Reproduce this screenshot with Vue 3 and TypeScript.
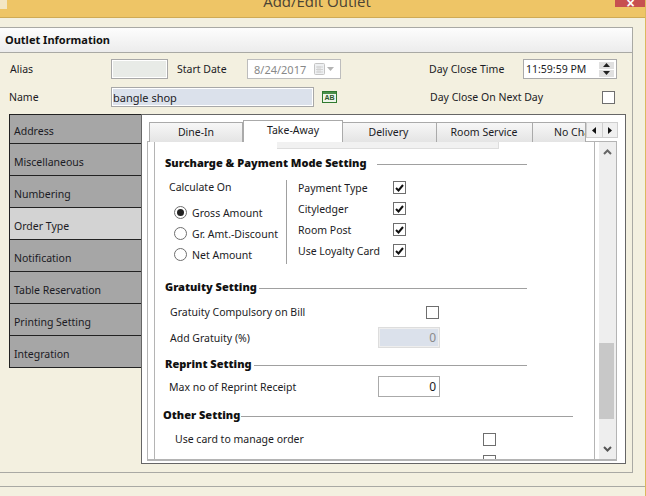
<script setup lang="ts">
const navItems = ['Address', 'Miscellaneous', 'Numbering', 'Order Type', 'Notification', 'Table Reservation', 'Printing Setting', 'Integration']
const tabs = [
  { label: 'Dine-In', cls: 't-dine' },
  { label: 'Take-Away', cls: 't-take' },
  { label: 'Delivery', cls: 't-del' },
  { label: 'Room Service', cls: 't-room' },
  { label: 'No Charge', cls: 't-no' }
]
const radios = [
  { label: 'Gross Amount', on: true },
  { label: 'Gr. Amt.-Discount', on: false },
  { label: 'Net Amount', on: false }
]
const pays = ['Payment Type', 'Cityledger', 'Room Post', 'Use Loyalty Card']
</script>

<template>
  <div class="win">
    <div class="titlebar">
      <div class="appicon"></div>
      <div class="title">Add/Edit Outlet</div>
      <div class="close"><span>×</span></div>
    </div>
    <div class="frame">
      <div class="head">Outlet Information</div>
      <div class="row r1">
        <span class="lab l-alias">Alias</span>
        <div class="inp alias"></div>
        <span class="lab l-start">Start Date</span>
        <div class="inp date">
          <span>8/24/2017</span>
          <svg class="cal" width="11" height="12" viewBox="0 0 11 12"><rect x="0.5" y="0.5" width="10" height="11" rx="1" fill="#eef0f2" stroke="#c4c4c4"/><path d="M2 4h7M2 6.500h7M2 9h7M4 3v7M6 3v7" stroke="#d2d2d2"/></svg>
          <svg class="drop" width="7" height="4" viewBox="0 0 7 4"><path d="M0 0h7L3.500 4z" fill="#b4b4b4"/></svg>
        </div>
        <span class="lab l-close">Day Close Time</span>
        <div class="inp time">
          <span>11:59:59 PM</span>
          <div class="spin">
            <div class="sb"><svg width="7" height="4" viewBox="0 0 7 4"><path d="M3.500 0L7 4H0z" fill="#222"/></svg></div>
            <div class="sb"><svg width="7" height="4" viewBox="0 0 7 4"><path d="M0 0h7L3.500 4z" fill="#222"/></svg></div>
          </div>
        </div>
      </div>
      <div class="row r2">
        <span class="lab l-name">Name</span>
        <div class="inp name">bangle shop</div>
        <div class="ab"><i></i><b>AB</b></div>
        <span class="lab l-next">Day Close On Next Day</span>
        <div class="chk c-next"></div>
      </div>
      <div class="content">
        <div class="nav">
          <div v-for="(n, i) in navItems" :key="n" class="navitem" :class="{ active: i === 3, first: i === 0 }">{{ n }}</div>
        </div>
        <div class="panel">
          <div class="tabrow">
            <div v-for="(t, i) in tabs" :key="t.label" class="tab" :class="[t.cls, { on: i === 1 }]"><span>{{ t.label }}</span></div>
            <div class="scrollers">
              <div class="sc"><svg width="4" height="7" viewBox="0 0 4 7"><path d="M4 0v7L0 3.500z" fill="#111"/></svg></div>
              <div class="sc"><svg width="4" height="7" viewBox="0 0 4 7"><path d="M0 0v7l4-3.500z" fill="#111"/></svg></div>
            </div>
          </div>
          <div class="pane">
            <div class="view">
              <div class="strip"></div>
              <div class="sec s1"><b>Surcharge &amp; Payment Mode Setting</b><i class="ln"></i></div>
              <div class="calc">
                <div class="calc-l">
                  <div class="lab calc-t">Calculate On</div>
                  <div v-for="r in radios" :key="r.label" class="radio-row">
                    <span class="radio" :class="{ on: r.on }"></span>
                    <span class="lab">{{ r.label }}</span>
                  </div>
                </div>
                <div class="calc-r">
                  <div v-for="p in pays" :key="p" class="pay-row">
                    <span class="lab pay-l">{{ p }}</span>
                    <span class="chk ticked"><svg width="9" height="8" viewBox="0 0 9 8"><path d="M1 4l2.500 2.500L8 1" fill="none" stroke="#111" stroke-width="2"/></svg></span>
                  </div>
                </div>
              </div>
              <div class="sec s2"><b>Gratuity Setting</b><i class="ln"></i></div>
              <div class="frow f1"><span class="lab w256">Gratuity Compulsory on Bill</span><span class="chk"></span></div>
              <div class="frow f2"><span class="lab w208">Add Gratuity (%)</span><div class="num dis">0</div></div>
              <div class="sec s3"><b>Reprint Setting</b><i class="ln"></i></div>
              <div class="frow f3"><span class="lab w209">Max no of Reprint Receipt</span><div class="num">0</div></div>
              <div class="sec s4"><b>Other Setting</b><i class="ln"></i></div>
              <div class="frow f4"><span class="lab w308">Use card to manage order</span><span class="chk"></span></div>
              <div class="frow f5"><span class="w308"></span><span class="chk"></span></div>
            </div>
            <div class="sbar">
              <svg class="ch" width="9" height="6" viewBox="0 0 9 6"><path d="M1 5l3.500-3.500L8 5" fill="none" stroke="#666" stroke-width="2"/></svg>
              <div class="track"><div class="thumb"></div></div>
              <svg class="ch" width="9" height="6" viewBox="0 0 9 6"><path d="M1 1l3.500 3.500L8 1" fill="none" stroke="#555" stroke-width="2"/></svg>
            </div>
          </div>
        </div>
      </div>
    </div>
    <div class="foot"></div>
  </div>
</template>

<style>
html, body { margin: 0; padding: 0; overflow: hidden; }
</style>

<style scoped>
.win {
  width: 646px; height: 496px; box-sizing: border-box; overflow: hidden;
  background: #f3f0e0; border-right: 1px solid #dcb85e;
  font: 10.500px "Noto Sans", "Liberation Sans", sans-serif; color: #1b1b24;
}
.titlebar {
  height: 18px; box-sizing: border-box; margin-right: -1px; background: #eec566; border-bottom: 1px solid #cfab55;
  display: flex; justify-content: space-between; overflow: hidden;
}
.appicon { width: 7px; height: 9px; background: #f3e6c4; }
.title { font: 15px "Open Sans", sans-serif; color: #4a4334; line-height: 16px; margin-top: -7px; margin-left: 12px; }
.close { width: 31px; height: 7px; background: #c75050; color: #fff; text-align: center; font: bold 14px/6px "Liberation Sans", sans-serif; overflow: hidden; }
.frame {
  margin-top: 9px; width: 633px; height: 446px; box-sizing: border-box;
  border: 1px solid #a9a9a4; border-left: 0;
}
.head {
  height: 25px; box-sizing: border-box; border-bottom: 1px solid #a9a9a4;
  background: linear-gradient(#fdfdfd, #ececec);
  font-weight: bold; line-height: 24px; padding-left: 5px; font-size: 11px; color: #111;
}
.row { display: flex; align-items: center; height: 20px; }
.r1 { margin-top: 6px; }
.r2 { margin-top: 8px; }
.lab { white-space: nowrap; }
.l-alias { margin-left: 10px; width: 101px; }
.l-start { margin-left: 9px; width: 70px; }
.l-close { margin-left: 88px; width: 94px; }
.l-name { margin-left: 9px; width: 102px; }
.l-next { margin-left: 93px; width: 172px; }
.inp { box-sizing: border-box; height: 20px; border: 1px solid #a8a8a8; display: flex; align-items: center; }
.alias { width: 57px; background: #e8ebe7; box-shadow: inset 0 0 0 1px #fff; }
.date { width: 94px; background: #fff; border-color: #bdbdbd; color: #888; padding-left: 6px; }
.date span { width: 60px; font-size: 11px; }
.cal { margin-right: 2px; }
.time { width: 94px; background: #fff; border-color: #aaa; padding-left: 2px; justify-content: space-between; }
.time span { font-size: 10.500px; }
.spin { width: 15px; margin-right: 2px; display: flex; flex-direction: column; gap: 1px; }
.sb { height: 7px; background: #e0e0e0; display: flex; align-items: center; justify-content: center; }
.name { width: 203px; background: #dbe1eb; padding-left: 1px; box-shadow: inset 0 0 0 1px #fff; font-size: 11px; }
.ab { width: 15px; height: 12px; margin-left: 8px; box-sizing: border-box; border: 1px solid #2f7a2f; background: #eef5ea; display: flex; flex-direction: column; align-items: center; overflow: hidden; }
.ab i { display: block; width: 100%; height: 2px; background: #4a8f4a; flex: none; }
.ab b { font: bold 7px/8px "Liberation Sans", sans-serif; color: #2c5a2c; }
.chk { box-sizing: border-box; width: 13px; height: 13px; border: 1px solid #6e6e6e; background: #fff; display: inline-flex; align-items: center; justify-content: center; flex: none; }
.content { display: flex; margin-top: 7px; margin-left: 9px; }
.nav { width: 132px; height: 254px; box-sizing: border-box; border: 1px solid #222; border-right: 0; background: #a6a6a6; }
.navitem { height: 32px; box-sizing: border-box; border-bottom: 1px solid #222; line-height: 37px; padding-left: 4px; }
.navitem.first { height: 29px; line-height: 33px; }
.navitem:last-child { border-bottom: 0; height: 32px; }
.navitem.active { background: #d3d3d3; }
.panel { width: 485px; height: 350px; box-sizing: border-box; border: 1px solid #666; background: #fff; }
.tabrow { display: flex; height: 26px; box-sizing: border-box; padding: 5px 0 0 7px; position: relative; }
.tab { box-sizing: border-box; height: 20px; margin-top: 2px; border: 1px solid #aaa; border-bottom: 0; border-left: 0; background: linear-gradient(#f7f7f7, #e4e4e4); text-align: center; line-height: 19px; overflow: hidden; white-space: nowrap; }
.t-dine { width: 94px; border-left: 1px solid #aaa; }
.t-take { width: 100px; height: 22px; margin-top: 0; background: #fff; line-height: 18px; border-top: 1px solid #aaa; border-left: 1px solid #aaa; position: relative; z-index: 1; }
.t-del { width: 94px; padding-right: 2px; }
.t-room { width: 96px; padding-right: 1px; }
.t-no { width: 53px; text-align: left; padding-left: 21px; }
.scrollers { position: absolute; left: 444px; top: 7px; width: 32px; height: 16px; display: flex; background: #f0f0f0; border: 1px solid #cfcfcf; box-sizing: border-box; }
.sc { flex: 1; display: flex; align-items: center; justify-content: center; }
.sc + .sc { border-left: 1px solid #cfcfcf; }
.pane { margin-left: 5px; width: 470px; height: 320px; box-sizing: border-box; border: 1px solid #b4b4b4; border-bottom: 2px solid #b4b4b4; display: flex; }
.view { height: 100%; margin-left: 6px; border-left: 1px solid #b4b4b4; border-right: 1px solid #b4b4b4; overflow: hidden; box-sizing: border-box; width: 441px; }
.strip { margin-left: 122px; width: 222px; height: 7px; box-sizing: border-box; background: #f1f1f1; border-bottom: 1px solid #ddd; border-right: 1px solid #ddd; }
.sec { display: flex; align-items: center; height: 14px; font-weight: bold; color: #111; font-size: 11px; }
.sec b { white-space: nowrap; margin-bottom: 2px; }
.ln { display: block; height: 1px; background: #a0a0a0; position: relative; top: 1px; flex: 1; }
.s1 { margin-top: 7px; margin-left: 10px; width: 362px; }
.s1 .ln { margin-left: 10px; }
.s2 { margin-top: 16px; margin-left: 10px; width: 362px; }
.s2 .ln { margin-left: 2px; }
.s3 { margin-top: 9px; margin-left: 10px; width: 362px; }
.s3 .ln { margin-left: 2px; }
.s4 { margin-top: 11px; margin-left: 8px; width: 410px; }
.s4 .ln { margin-left: 1px; }
.calc { display: flex; height: 84px; margin-top: 10px; margin-left: 14px; }
.calc-l { width: 118px; box-sizing: border-box; border-right: 1px solid #a0a0a0; }
.calc-t { height: 14px; line-height: 14px; }
.radio-row { display: flex; align-items: center; height: 21px; padding-left: 5px; gap: 5px; }
.radio-row:nth-child(2) { margin-top: 8px; }
.radio { width: 13px; height: 13px; box-sizing: border-box; border: 1px solid #6e6e6e; border-radius: 50%; background: #fff; display: block; position: relative; }
.radio.on::after { content: ''; position: absolute; left: 2px; top: 2px; width: 7px; height: 7px; border-radius: 50%; background: #222; }
.calc-r { padding-left: 11px; margin-top: -3px; }
.pay-row { display: flex; align-items: center; height: 21px; }
.pay-l { width: 95px; }
.frow { display: flex; align-items: center; margin-left: 15px; }
.w256 { width: 256px; }
.w208 { width: 208px; }
.w209 { width: 209px; margin-left: -1px; }
.w308 { width: 308px; margin-left: 5px; display: block; }
.f1 { margin-top: 11px; height: 14px; }
.f2 { margin-top: 8px; height: 21px; }
.f3 { margin-top: 5px; height: 21px; }
.f4 { margin-top: 10px; height: 14px; }
.f5 { margin-top: 9px; height: 14px; align-items: flex-start; }
.num { box-sizing: border-box; width: 62px; height: 21px; border: 1px solid #aaa; text-align: right; line-height: 19px; padding-right: 3px; font-size: 12px; background: #fff; }
.num.dis { border-color: #ddd; background: #dbe1eb; color: #8a8a8a; box-shadow: inset 0 0 0 1px #eee; }
.sbar { width: 17px; margin-left: 4px; background: #eee; display: flex; flex-direction: column; align-items: center; }
.ch { flex: none; margin: 7px 0; }
.track { flex: 1; width: 100%; display: flex; flex-direction: column; justify-content: flex-end; }
.thumb { height: 76px; margin-bottom: 20px; background: #c8c8c8; width: 15px; align-self: flex-start; }
.foot { margin-top: 13px; height: 10px; border-top: 1px solid #a9a9a4; margin-right: -1px; }
</style>
